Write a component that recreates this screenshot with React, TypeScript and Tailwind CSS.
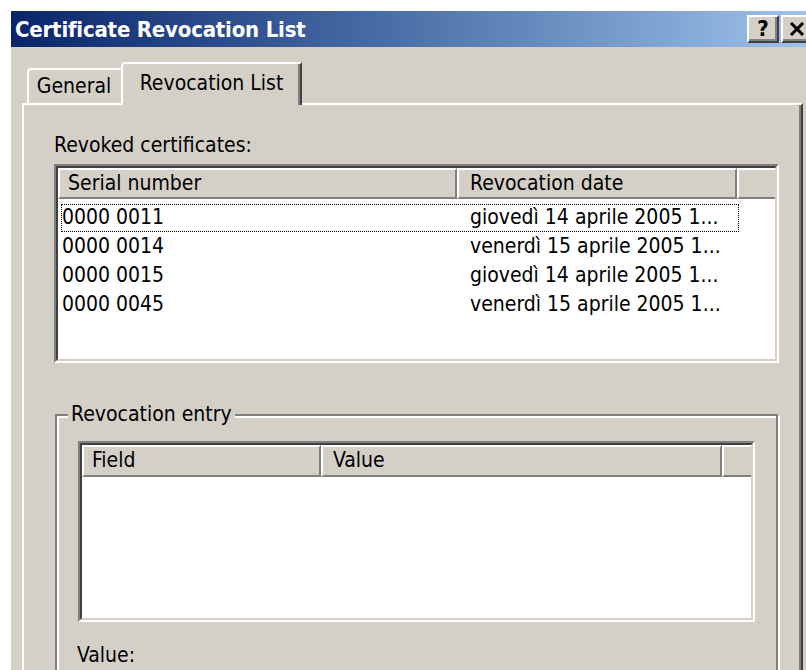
import { useState } from 'react'

interface RevokedCert {
  serial: string
  date: string
}

const revoked: RevokedCert[] = [
  { serial: '0000 0011', date: 'giovedì 14 aprile 2005 1...' },
  { serial: '0000 0014', date: 'venerdì 15 aprile 2005 1...' },
  { serial: '0000 0015', date: 'giovedì 14 aprile 2005 1...' },
  { serial: '0000 0045', date: 'venerdì 15 aprile 2005 1...' },
]

const font = "font-['DejaVu_Sans_Condensed','DejaVu_Sans',sans-serif]"

// raised column header cell of a classic list view
function HeaderCell({ label, width, pad = 'pl-[8px]' }: { label: string; width: string; pad?: string }) {
  return (
    <div
      className={`${width} ${pad} h-full flex items-center shrink-0 border-t-2 border-l-2 border-t-white border-l-white border-r-2 border-b-2 border-r-[#808080] border-b-[#808080]`}
    >
      {label}
    </div>
  )
}

// sunken 3D frame used by list boxes
function Sunken({ className, children }: { className: string; children: React.ReactNode }) {
  return (
    <div className={`${className} shrink-0 border-2 border-t-[#808080] border-l-[#808080] border-r-white border-b-white`}>
      <div className="w-full h-full flex flex-col border-2 border-t-[#404040] border-l-[#404040] border-r-[#d4d0c8] border-b-[#d4d0c8] bg-white">
        {children}
      </div>
    </div>
  )
}

function CaptionButton({ children }: { children: React.ReactNode }) {
  return (
    <div className="w-[32px] h-[28px] shrink-0 flex items-center justify-center bg-[#d4d0c8] text-black font-bold text-[22px] leading-none border-t-2 border-l-2 border-t-white border-l-white border-r-2 border-b-2 border-r-[#404040] border-b-[#404040] shadow-[inset_-2px_-2px_0_#808080]">
      {children}
    </div>
  )
}

export default function App() {
  const [selected, setSelected] = useState(0)

  return (
    <div className={`w-[806px] h-[670px] bg-white overflow-hidden pt-[11px] pl-[11px] ${font} text-[21px] text-black`}>
      <div className="w-[830px] h-[720px] bg-[#d4d0c8] flex flex-col">
        {/* caption */}
        <div className="h-[36px] shrink-0 flex items-center bg-gradient-to-r from-[#0a246a] to-[#a6caf0] pl-[4px] pr-[28px]">
          <span className="text-white font-bold text-[22px] tracking-[-0.2px] flex-1">Certificate Revocation List</span>
          <div className="flex gap-[2px]">
            <CaptionButton>?</CaptionButton>
            <CaptionButton>
              <svg width="16" height="14" viewBox="0 0 16 14">
                <path d="M2 1 L14 13 M14 1 L2 13" stroke="#000" strokeWidth="3" />
              </svg>
            </CaptionButton>
          </div>
        </div>

        <div className="pl-[11px] pt-[15px] flex flex-col">
          {/* tabs */}
          <div className="flex items-end h-[41px] pl-[5px] shrink-0">
            <div className="w-[96px] h-[35px] flex items-center justify-center pr-[4px] border-t-2 border-l-2 border-white rounded-tl-[4px]">
              General
            </div>
            <div className="relative z-10 -ml-[2px] -mb-[2px] w-[181px] h-[43px] flex items-center justify-center pb-[2px] bg-[#d4d0c8] border-t-2 border-l-2 border-t-white border-l-white border-r-2 border-r-[#404040] shadow-[inset_-2px_0_0_#808080] rounded-tl-[4px]">
              Revocation List
            </div>
          </div>

          {/* tab page */}
          <div className="w-[781px] h-[640px] shrink-0 border-t-2 border-l-2 border-white border-r-2 border-r-[#404040] shadow-[inset_-2px_0_0_#808080] pl-[30px] flex flex-col">
            <div className="mt-[28px] h-[24px] leading-[24px] shrink-0">Revoked certificates:</div>

            <Sunken className="mt-[7px] w-[725px] h-[199px]">
              <div className="h-[31px] flex bg-[#d4d0c8] shrink-0">
                <HeaderCell label="Serial number" width="w-[399px]" />
                <HeaderCell label="Revocation date" width="w-[280px]" pad="pl-[11px]" />
                <div className="flex-1 border-t-2 border-l-2 border-t-white border-l-white border-b-2 border-b-[#808080]" />
              </div>
              <div className="pt-[4px]">
                {revoked.map((r, i) => (
                  <div
                    key={r.serial}
                    onClick={() => setSelected(i)}
                    className={`ml-[3px] my-[1px] w-[678px] h-[28px] flex items-center border ${
                      i === selected ? 'border-dotted border-black' : 'border-transparent'
                    }`}
                  >
                    <span className="w-[408px] shrink-0">{r.serial}</span>
                    <span>{r.date}</span>
                  </div>
                ))}
              </div>
            </Sunken>

            {/* revocation entry group */}
            <div className="relative shrink-0 mt-[51px] ml-[1px] w-[723px] h-[300px] border-2 border-[#808080] shadow-[inset_2px_2px_0_#fff,2px_2px_0_#fff] pt-[25px] pl-[21px]">
              <span className="absolute -top-[14px] left-[11px] px-[3px] bg-[#d4d0c8] leading-[24px]">Revocation entry</span>

              <Sunken className="w-[677px] h-[181px]">
                <div className="h-[32px] flex bg-[#d4d0c8] shrink-0">
                  <HeaderCell label="Field" width="w-[239px]" />
                  <HeaderCell label="Value" width="w-[401px]" pad="pl-[10px]" />
                  <div className="flex-1 border-t-2 border-l-2 border-t-white border-l-white border-b-2 border-b-[#808080]" />
                </div>
              </Sunken>

              <div className="mt-[21px] -ml-[1px] h-[24px] leading-[24px]">Value:</div>
            </div>
          </div>
        </div>
      </div>
    </div>
  )
}
